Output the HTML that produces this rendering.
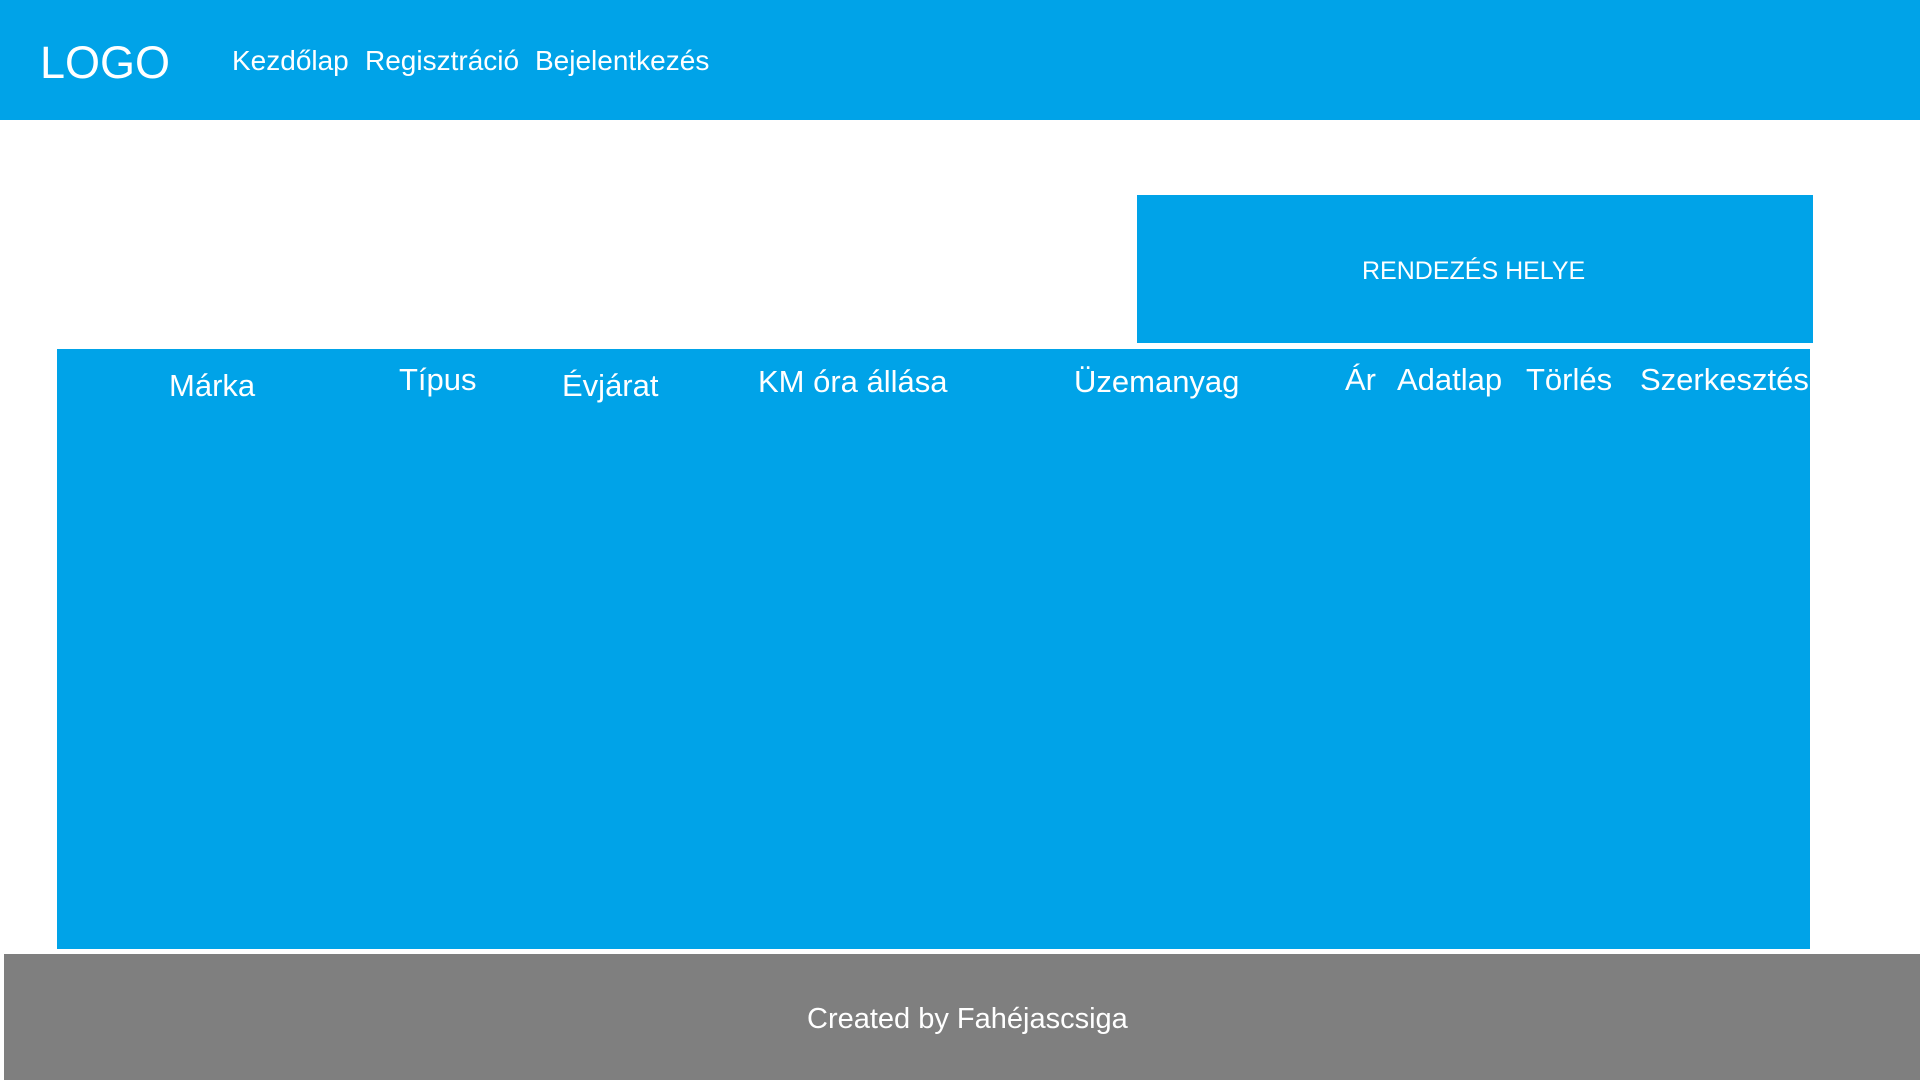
<!DOCTYPE html>
<html><head><meta charset="utf-8"><style>
*{margin:0;padding:0;box-sizing:border-box}
body{width:1920px;height:1080px;position:relative;background:#fff;font-family:"Liberation Sans",sans-serif;color:#fff;overflow:hidden}
.b{position:absolute;background:#00a3e8}
.t{position:absolute;white-space:nowrap;line-height:normal}
.h{font-size:31px}
</style></head><body>
<div class="b" style="left:0;top:0;width:1920px;height:120px"></div>
<div class="t" style="left:40px;top:37px;font-size:45px">LOGO</div>
<div class="t" style="left:232px;top:45px;font-size:28px">Kezdőlap</div>
<div class="t" style="left:365px;top:45px;font-size:28px">Regisztráció</div>
<div class="t" style="left:535px;top:45px;font-size:28px">Bejelentkezés</div>

<div class="b" style="left:1137px;top:195px;width:676px;height:148px"></div>
<div class="t" style="left:1362px;top:257px;font-size:25px">RENDEZÉS HELYE</div>

<div class="b" style="left:57px;top:349px;width:1753px;height:600px"></div>
<div class="t h" style="left:169px;top:368px">Márka</div>
<div class="t h" style="left:399px;top:362px">Típus</div>
<div class="t h" style="left:562px;top:368px">Évjárat</div>
<div class="t h" style="left:758px;top:364px">KM óra állása</div>
<div class="t h" style="left:1074px;top:364px">Üzemanyag</div>
<div class="t h" style="left:1345px;top:362px">Ár</div>
<div class="t h" style="left:1397px;top:362px">Adatlap</div>
<div class="t h" style="left:1526px;top:362px">Törlés</div>
<div class="t h" style="left:1640px;top:362px">Szerkesztés</div>

<div style="position:absolute;left:4px;top:954px;width:1916px;height:126px;background:#7f7f7f"></div>
<div class="t" style="left:807px;top:1003px;font-size:29px">Created by Fahéjascsiga</div>
</body></html>
